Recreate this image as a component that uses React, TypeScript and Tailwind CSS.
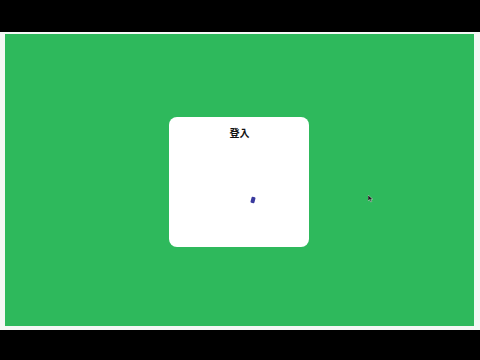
export default function App() {
    return (
        <div className="w-[480px] h-[360px] bg-black flex flex-col" style={{ fontFamily: '"Noto Sans CJK TC", "Noto Sans", sans-serif' }}>
            <div className="h-[32px]" />
            <div className="h-[298px] bg-[#f4f7f5] pl-[5px] pr-[6px] pt-[2px] pb-[4px]">
                <div className="relative w-full h-full bg-[#2eb95c] flex items-center justify-center pt-[4px]">
                    <div className="mr-[2px] w-[140px] h-[130px] bg-white rounded-[8px] flex flex-col items-center">
                        <h1 className="mt-[9px] ml-[2px] text-[10px] leading-[14px] font-bold text-[#111]">登入</h1>
                        <div className="mt-[57px] ml-[28px] w-[4px] h-[6px] bg-[#3a3a9e] rotate-[15deg] rounded-[1px]" />
                    </div>
                    {/* mouse pointer */}
                    <svg className="absolute left-[363px] top-[161px]" width="6" height="8" viewBox="0 0 6 8">
                        <path d="M0 0 L0 6 L1.6 4.6 L2.8 7 L3.8 6.5 L2.7 4.2 L4.8 4.2 Z" fill="#1a1a1a" stroke="#ffffff" strokeWidth="0.4" />
                    </svg>
                </div>
            </div>
            <div className="flex-1" />
        </div>
    );
}
